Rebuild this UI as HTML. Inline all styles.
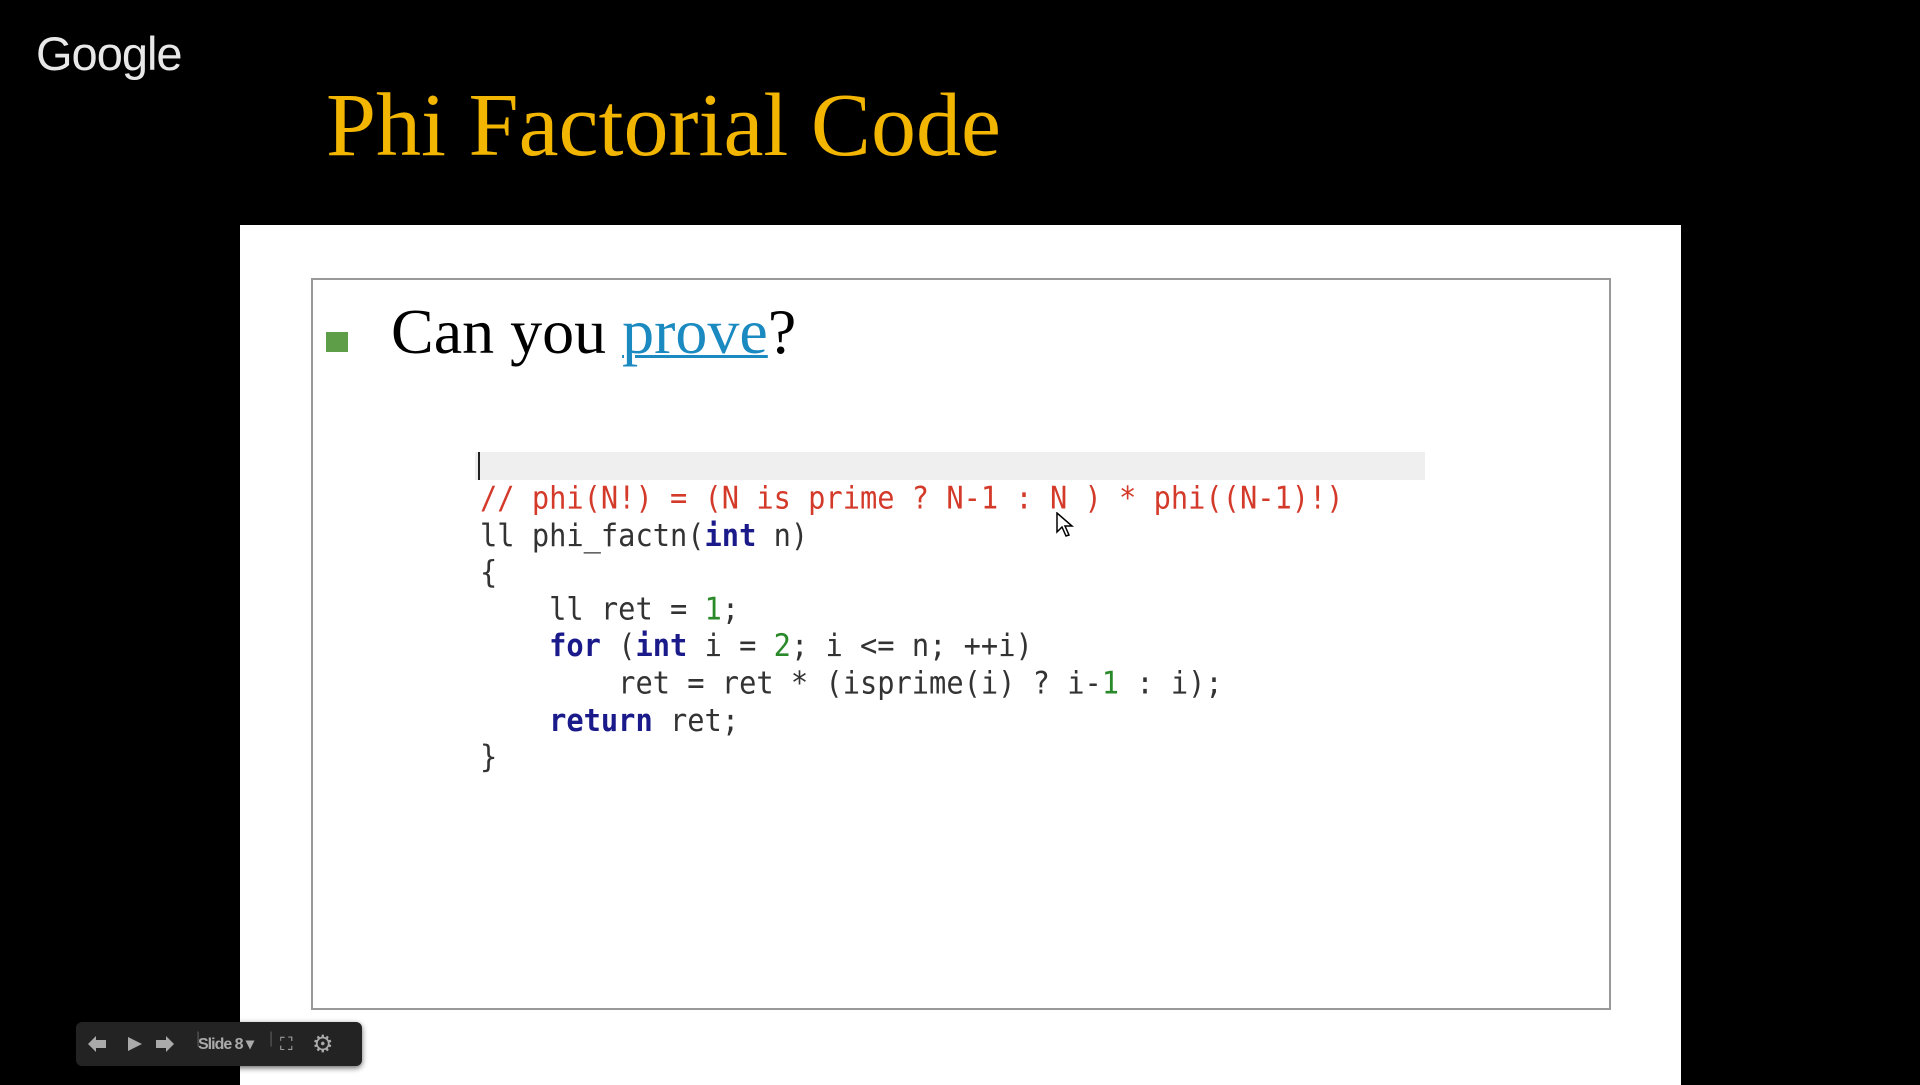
<!DOCTYPE html>
<html><head><meta charset="utf-8"><style>
body{margin:0;width:1920px;height:1080px;background:#000;position:relative;overflow:hidden;font-family:"Liberation Sans",sans-serif}
.g{position:absolute;left:36px;top:26px;color:#e8e8e8;font-size:47px;letter-spacing:-1px}
.t{position:absolute;left:326px;top:74px;color:#f2b500;font-family:"Liberation Serif",serif;font-size:90px;white-space:nowrap}
.s{position:absolute;left:240px;top:225px;width:1441px;height:860px;background:#fff}
.b{position:absolute;left:311px;top:278px;width:1296px;height:728px;border:2px solid #999;background:#fff}
.bul{position:absolute;left:326px;top:332px;width:22px;height:20px;background:#5e9e48}
.q{position:absolute;left:391px;top:295px;font-family:"Liberation Serif",serif;font-size:64px;color:#000;white-space:nowrap}
.q a{color:#1a8ac0;text-decoration:underline;text-decoration-thickness:3px}
.hl{position:absolute;left:475px;top:452px;width:950px;height:28px;background:#efefef}
.cur{position:absolute;left:478px;top:452px;width:2px;height:28px;background:#222}
pre{position:absolute;left:480px;top:480px;margin:0;font-family:"DejaVu Sans Mono",monospace;font-size:28.7px;line-height:33.6px;color:#333;transform:scaleY(1.1);transform-origin:0 0}
.r{color:#d43a2a}.k{color:#1a1a8a;font-weight:bold}.n{color:#2a8a2a}
.tb{position:absolute;left:76px;top:1022px;width:286px;height:44px;background:#232323;border-radius:6px;box-shadow:0 2px 6px rgba(0,0,0,.6);color:#aaa;font-size:16px}
.tb span{position:absolute;top:12px}
</style></head><body>
<div class="g">Google</div>
<div class="t">Phi Factorial Code</div>
<div class="s"></div>
<div class="b"></div>
<div class="bul"></div>
<div class="q">Can you <a>prove</a>?</div>
<div class="hl"></div><div class="cur"></div>
<pre><span class="r">// phi(N!) = (N is prime ? N-1 : N ) * phi((N-1)!)</span>
ll phi_factn(<span class="k">int</span> n)
{
    ll ret = <span class="n">1</span>;
    <span class="k">for</span> (<span class="k">int</span> i = <span class="n">2</span>; i &lt;= n; ++i)
        ret = ret * (isprime(i) ? i-<span class="n">1</span> : i);
    <span class="k">return</span> ret;
}</pre>
<svg style="position:absolute;left:1056px;top:512px" width="18" height="26"><path d="M1 1 L1 20 L6 15 L10 24 L13 23 L9 14 L16 14 Z" fill="#fff" stroke="#000" stroke-width="1.5"/></svg>
<div class="tb">
<svg style="position:absolute;left:10px;top:12px" width="110" height="20" fill="#aaa"><path d="M2 10 L10 2 L10 6 L20 6 L20 14 L10 14 L10 18 Z"/><path d="M42 3 L56 10 L42 17 Z"/><path d="M88 10 L80 2 L80 6 L70 6 L70 14 L80 14 L80 18 Z"/></svg>
<span style="left:120px;top:8px;color:#555">|</span>
<span style="left:122px;font-weight:bold;letter-spacing:-1px">Slide 8 ▾</span>
<span style="left:193px;top:8px;color:#555">|</span>
<span style="left:204px;font-size:18px">⛶</span>
<span style="left:236px;top:8px;font-size:24px">⚙</span>
</div>
</body></html>
